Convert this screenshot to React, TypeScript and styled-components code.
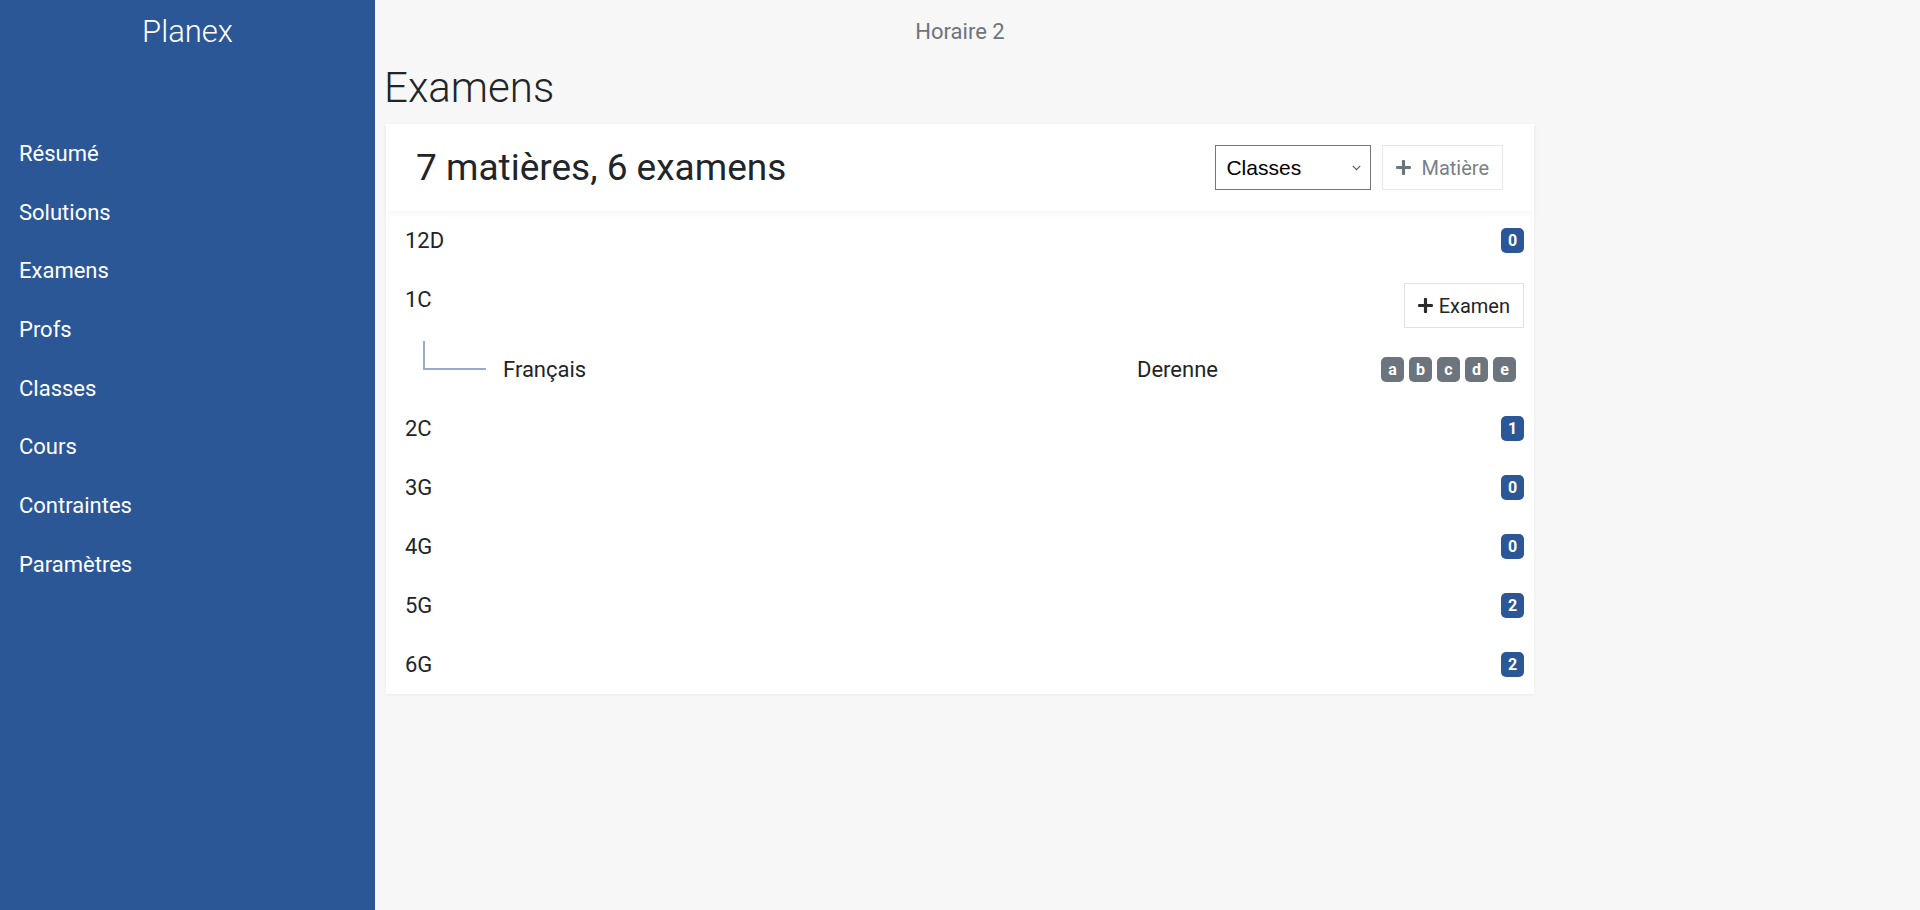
import React from 'react';
import styled, { createGlobalStyle } from 'styled-components';
import { FaPlus } from 'react-icons/fa';

const GlobalStyle = createGlobalStyle`
  body {
    margin: 0;
    background: #f7f7f7;
    font-family: Roboto, "Noto Sans", sans-serif;
    color: #212529;
  }
`;

const BLUE = '#2b5797';

const Page = styled.div`
  display: flex;
  min-height: 100vh;
`;

const Sidebar = styled.nav`
  width: 375px;
  flex-shrink: 0;
  background: ${BLUE};
  color: #fff;
`;

const Brand = styled.div`
  height: 62px;
  display: flex;
  align-items: center;
  justify-content: center;
  font-size: 31px;
  font-weight: 300;
  margin-bottom: 62px;
`;

const NavItem = styled.a`
  height: 58.7px;
  display: flex;
  align-items: center;
  padding-left: 19px;
  font-size: 22px;
  color: #fff;
  text-decoration: none;
  cursor: pointer;
`;

const Main = styled.main`
  flex: 1;
  padding: 0 11px;
`;

const Column = styled.div`
  width: 1148px;
`;

const TopBar = styled.div`
  height: 63px;
  display: flex;
  align-items: center;
  justify-content: center;
  font-size: 22px;
  color: #6c757d;
`;

const PageTitle = styled.h1`
  margin: 0 0 11px -2px;
  font-size: 42px;
  font-weight: 300;
  line-height: 50px;
  color: #212529;
`;

const Card = styled.section`
  background: #fff;
  box-shadow: 0 1px 3px rgba(0, 0, 0, 0.06);
`;

const CardHeader = styled.header`
  height: 87px;
  display: flex;
  align-items: center;
  justify-content: space-between;
  padding: 0 31px 0 30px;
  box-shadow: 0 3px 6px rgba(0, 0, 0, 0.035);
  position: relative;
`;

const CardTitle = styled.h2`
  margin: 0;
  font-size: 37px;
  font-weight: 400;
  color: #212529;
`;

const Controls = styled.div`
  display: flex;
  align-items: center;
  gap: 11px;
`;

const SelectWrap = styled.div`
  position: relative;
  svg {
    position: absolute;
    right: 10px;
    top: 20px;
    pointer-events: none;
  }
`;

const Select = styled.select`
  width: 156px;
  height: 45px;
  padding: 0 24px 0 10px;
  border: 1px solid #767676;
  border-radius: 0;
  background: #fff;
  appearance: none;
  font-family: "Liberation Sans", Arial, sans-serif;
  font-size: 21px;
  color: #000;
`;

const Button = styled.button<{ $muted?: boolean }>`
  height: 45px;
  display: inline-flex;
  align-items: center;
  gap: ${({ $muted }) => ($muted ? '9px' : '5px')};
  padding: 0 13px 0 12px;
  border: 1px solid ${({ $muted }) => ($muted ? '#e8e8e8' : '#dee2e6')};
  background: #fff;
  font-family: Roboto, sans-serif;
  font-size: 20px;
  color: ${({ $muted }) => ($muted ? '#7a7f85' : '#212529')};
  svg {
    width: 17px;
    height: 17px;
    color: ${({ $muted }) => ($muted ? '#6c757d' : '#2b2b2b')};
  }
`;

const Row = styled.div`
  display: flex;
  align-items: flex-start;
  justify-content: space-between;
  padding: 13px 10px 13px 19px;
`;

const RowLabel = styled.span`
  font-size: 22px;
  line-height: 33px;
`;

const RowEnd = styled.div`
  height: 33px;
  display: flex;
  align-items: center;
`;

const SubRow = styled.div`
  height: 57.5px;
  display: grid;
  grid-template-columns: 1fr 244px auto;
  align-items: center;
  padding: 0 18px 0 19px;
`;

const Subject = styled.div`
  display: flex;
  align-items: center;
  height: 100%;
  font-size: 22px;
`;

const Connector = styled.span`
  align-self: flex-start;
  width: 61px;
  height: 27px;
  margin: 0 17px 0 18px;
  border-left: 2px solid #9aabc9;
  border-bottom: 2px solid #9aabc9;
`;

const Teacher = styled.span`
  font-size: 22px;
`;

const BadgeGroup = styled.div`
  display: flex;
  gap: 5px;
`;

const Badge = styled.span<{ $tone?: 'blue' | 'gray' }>`
  width: 23px;
  height: 25px;
  display: inline-flex;
  align-items: center;
  justify-content: center;
  border-radius: 5px;
  background: ${({ $tone }) => ($tone === 'gray' ? '#6c757d' : BLUE)};
  color: #fff;
  font-size: 16px;
  font-weight: 700;
`;

const navItems = ['Résumé', 'Solutions', 'Examens', 'Profs', 'Classes', 'Cours', 'Contraintes', 'Paramètres'];

const classes = [
  { name: '12D', count: 0 },
  { name: '1C', count: null },
  { name: '2C', count: 1 },
  { name: '3G', count: 0 },
  { name: '4G', count: 0 },
  { name: '5G', count: 2 },
  { name: '6G', count: 2 },
];

function Chevron() {
  return (
    <svg width="9" height="6" viewBox="0 0 9 6" fill="none">
      <path d="M0.8 0.8 L4.5 4.6 L8.2 0.8" stroke="#555" strokeWidth="1.1" />
    </svg>
  );
}

export default function App() {
  return (
    <>
      <GlobalStyle />
      <Page>
        <Sidebar>
          <Brand>Planex</Brand>
          {navItems.map((item) => (
            <NavItem key={item}>{item}</NavItem>
          ))}
        </Sidebar>
        <Main>
          <Column>
            <TopBar>Horaire 2</TopBar>
            <PageTitle>Examens</PageTitle>
            <Card>
              <CardHeader>
                <CardTitle>7 matières, 6 examens</CardTitle>
                <Controls>
                  <SelectWrap>
                    <Select defaultValue="classes">
                      <option value="classes">Classes</option>
                      <option value="profs">Profs</option>
                      <option value="matieres">Matières</option>
                    </Select>
                    <Chevron />
                  </SelectWrap>
                  <Button $muted>
                    <FaPlus />
                    Matière
                  </Button>
                </Controls>
              </CardHeader>
              {classes.map((c) => (
                <React.Fragment key={c.name}>
                  <Row>
                    <RowLabel>{c.name}</RowLabel>
                    {c.count === null ? (
                      <Button>
                        <FaPlus />
                        Examen
                      </Button>
                    ) : (
                      <RowEnd>
                        <Badge>{c.count}</Badge>
                      </RowEnd>
                    )}
                  </Row>
                  {c.name === '1C' && (
                    <SubRow>
                      <Subject>
                        <Connector />
                        Français
                      </Subject>
                      <Teacher>Derenne</Teacher>
                      <BadgeGroup>
                        {['a', 'b', 'c', 'd', 'e'].map((l) => (
                          <Badge key={l} $tone="gray">
                            {l}
                          </Badge>
                        ))}
                      </BadgeGroup>
                    </SubRow>
                  )}
                </React.Fragment>
              ))}
            </Card>
          </Column>
        </Main>
      </Page>
    </>
  );
}
